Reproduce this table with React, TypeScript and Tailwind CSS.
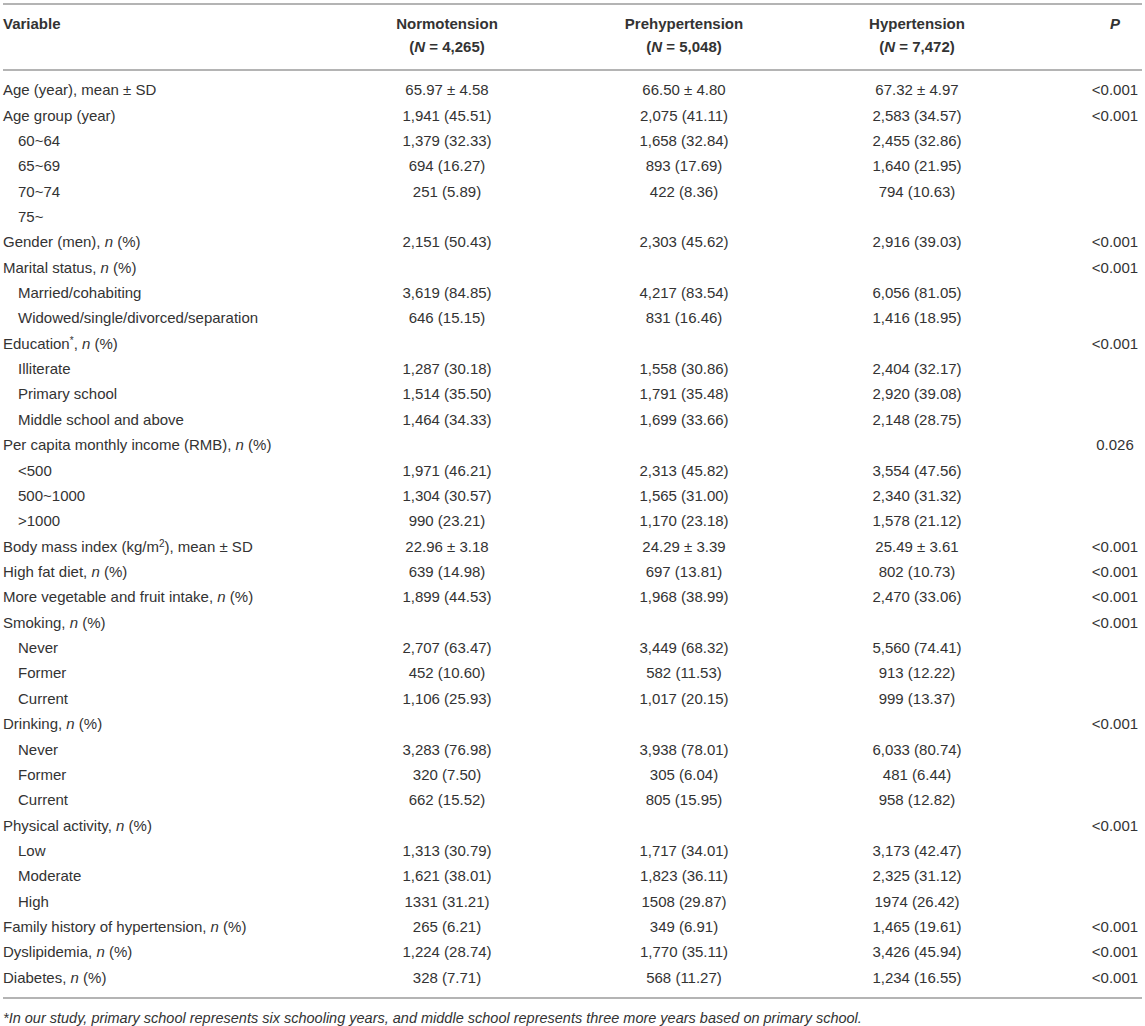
import React from 'react';

type Row = {
  label: React.ReactNode;
  sub?: boolean;
  a?: string;
  b?: string;
  c?: string;
  p?: string;
};

const N = () => <i>n</i>;

const ROWS: Row[] = [
  { label: 'Age (year), mean ± SD', a: '65.97 ± 4.58', b: '66.50 ± 4.80', c: '67.32 ± 4.97', p: '<0.001' },
  { label: 'Age group (year)', a: '1,941 (45.51)', b: '2,075 (41.11)', c: '2,583 (34.57)', p: '<0.001' },
  { label: '60~64', sub: true, a: '1,379 (32.33)', b: '1,658 (32.84)', c: '2,455 (32.86)' },
  { label: '65~69', sub: true, a: '694 (16.27)', b: '893 (17.69)', c: '1,640 (21.95)' },
  { label: '70~74', sub: true, a: '251 (5.89)', b: '422 (8.36)', c: '794 (10.63)' },
  { label: '75~', sub: true },
  { label: <>Gender (men), <N /> (%)</>, a: '2,151 (50.43)', b: '2,303 (45.62)', c: '2,916 (39.03)', p: '<0.001' },
  { label: <>Marital status, <N /> (%)</>, p: '<0.001' },
  { label: 'Married/cohabiting', sub: true, a: '3,619 (84.85)', b: '4,217 (83.54)', c: '6,056 (81.05)' },
  { label: 'Widowed/single/divorced/separation', sub: true, a: '646 (15.15)', b: '831 (16.46)', c: '1,416 (18.95)' },
  { label: <>Education<sup className="text-[10px]">*</sup>, <N /> (%)</>, p: '<0.001' },
  { label: 'Illiterate', sub: true, a: '1,287 (30.18)', b: '1,558 (30.86)', c: '2,404 (32.17)' },
  { label: 'Primary school', sub: true, a: '1,514 (35.50)', b: '1,791 (35.48)', c: '2,920 (39.08)' },
  { label: 'Middle school and above', sub: true, a: '1,464 (34.33)', b: '1,699 (33.66)', c: '2,148 (28.75)' },
  { label: <>Per capita monthly income (RMB), <N /> (%)</>, p: '0.026' },
  { label: '<500', sub: true, a: '1,971 (46.21)', b: '2,313 (45.82)', c: '3,554 (47.56)' },
  { label: '500~1000', sub: true, a: '1,304 (30.57)', b: '1,565 (31.00)', c: '2,340 (31.32)' },
  { label: '>1000', sub: true, a: '990 (23.21)', b: '1,170 (23.18)', c: '1,578 (21.12)' },
  { label: <>Body mass index (kg/m<sup className="text-[10px]">2</sup>), mean ± SD</>, a: '22.96 ± 3.18', b: '24.29 ± 3.39', c: '25.49 ± 3.61', p: '<0.001' },
  { label: <>High fat diet, <N /> (%)</>, a: '639 (14.98)', b: '697 (13.81)', c: '802 (10.73)', p: '<0.001' },
  { label: <>More vegetable and fruit intake, <N /> (%)</>, a: '1,899 (44.53)', b: '1,968 (38.99)', c: '2,470 (33.06)', p: '<0.001' },
  { label: <>Smoking, <N /> (%)</>, p: '<0.001' },
  { label: 'Never', sub: true, a: '2,707 (63.47)', b: '3,449 (68.32)', c: '5,560 (74.41)' },
  { label: 'Former', sub: true, a: '452 (10.60)', b: '582 (11.53)', c: '913 (12.22)' },
  { label: 'Current', sub: true, a: '1,106 (25.93)', b: '1,017 (20.15)', c: '999 (13.37)' },
  { label: <>Drinking, <N /> (%)</>, p: '<0.001' },
  { label: 'Never', sub: true, a: '3,283 (76.98)', b: '3,938 (78.01)', c: '6,033 (80.74)' },
  { label: 'Former', sub: true, a: '320 (7.50)', b: '305 (6.04)', c: '481 (6.44)' },
  { label: 'Current', sub: true, a: '662 (15.52)', b: '805 (15.95)', c: '958 (12.82)' },
  { label: <>Physical activity, <N /> (%)</>, p: '<0.001' },
  { label: 'Low', sub: true, a: '1,313 (30.79)', b: '1,717 (34.01)', c: '3,173 (42.47)' },
  { label: 'Moderate', sub: true, a: '1,621 (38.01)', b: '1,823 (36.11)', c: '2,325 (31.12)' },
  { label: 'High', sub: true, a: '1331 (31.21)', b: '1508 (29.87)', c: '1974 (26.42)' },
  { label: <>Family history of hypertension, <N /> (%)</>, a: '265 (6.21)', b: '349 (6.91)', c: '1,465 (19.61)', p: '<0.001' },
  { label: <>Dyslipidemia, <N /> (%)</>, a: '1,224 (28.74)', b: '1,770 (35.11)', c: '3,426 (45.94)', p: '<0.001' },
  { label: <>Diabetes, <N /> (%)</>, a: '328 (7.71)', b: '568 (11.27)', c: '1,234 (16.55)', p: '<0.001' },
];

const COLS = 'grid grid-cols-[327px_234px_240px_226px_112px]';

const Header = () => (
  <div className={`${COLS} pt-[7px] pb-[11px] font-bold leading-[23px] border-b-2 border-[#b4b4b4]`}>
    <div>Variable</div>
    <div className="text-center">Normotension<br />(<i>N</i> = 4,265)</div>
    <div className="text-center">Prehypertension<br />(<i>N</i> = 5,048)</div>
    <div className="text-center">Hypertension<br />(<i>N</i> = 7,472)</div>
    <div className="text-center pl-[58px]"><i>P</i></div>
  </div>
);

export default function App() {
  return (
    <div className="w-[1145px] h-[1026px] overflow-hidden bg-white pt-[3px] px-[3px] text-[15px] text-[#333] font-['Liberation_Sans',Arial,sans-serif]">
      <div className="border-t-2 border-[#b4b4b4]">
        <Header />
        <div className="pt-[6px] pb-[7px] border-b-2 border-[#b4b4b4]">
          {ROWS.map((r, i) => (
            <div key={i} className={`${COLS} h-[25.37px] items-center leading-none`}>
              <div className={r.sub ? 'pl-[15px]' : ''}>{r.label}</div>
              <div className="text-center">{r.a}</div>
              <div className="text-center">{r.b}</div>
              <div className="text-center">{r.c}</div>
              <div className="text-center pl-[58px]">{r.p}</div>
            </div>
          ))}
        </div>
      </div>
      <p className="pt-[10px] text-[14.5px] leading-[18px] italic">
        *In our study, primary school represents six schooling years, and middle school represents three more years based on primary school.
      </p>
    </div>
  );
}
